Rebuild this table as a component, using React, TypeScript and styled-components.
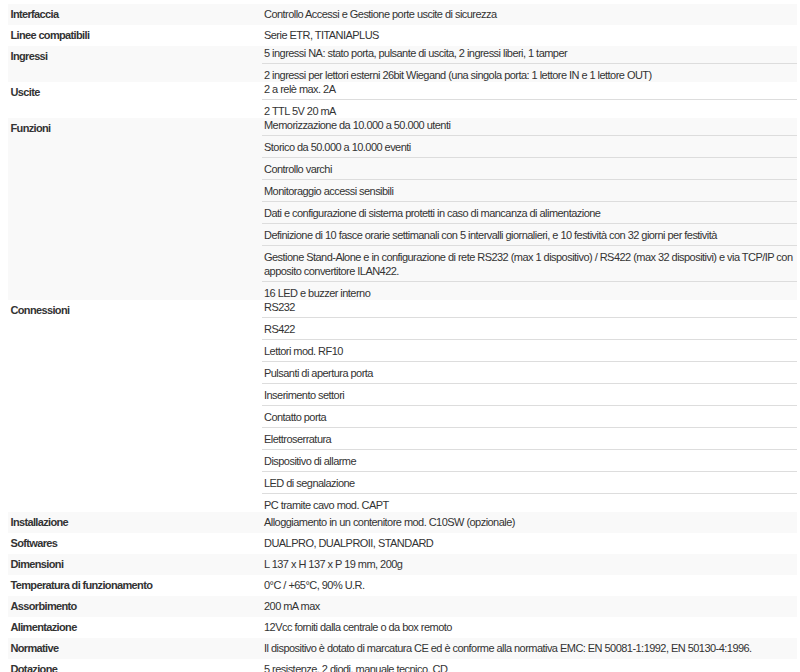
import React from 'react'
import styled, { createGlobalStyle } from 'styled-components'

const GlobalStyle = createGlobalStyle`
  html, body {
    margin: 0;
    padding: 0;
    background: #fff;
  }
  body {
    font-family: "Liberation Sans", Arial, sans-serif;
    font-size: 11px;
    line-height: 14px;
    letter-spacing: -0.54px;
    color: #333;
  }
`

type Spec = { label: string; values: string[] }

const specs: Spec[] = [
  { label: 'Interfaccia', values: ['Controllo Accessi e Gestione porte uscite di sicurezza'] },
  { label: 'Linee compatibili', values: ['Serie ETR, TITANIAPLUS'] },
  {
    label: 'Ingressi',
    values: [
      '5 ingressi NA: stato porta, pulsante di uscita, 2 ingressi liberi, 1 tamper',
      '2 ingressi per lettori esterni 26bit Wiegand (una singola porta: 1 lettore IN e 1 lettore OUT)',
    ],
  },
  { label: 'Uscite', values: ['2 a relè max. 2A', '2 TTL 5V 20 mA'] },
  {
    label: 'Funzioni',
    values: [
      'Memorizzazione da 10.000 a 50.000 utenti',
      'Storico da 50.000 a 10.000 eventi',
      'Controllo varchi',
      'Monitoraggio accessi sensibili',
      'Dati e configurazione di sistema protetti in caso di mancanza di alimentazione',
      'Definizione di 10 fasce orarie settimanali con 5 intervalli giornalieri, e 10 festività con 32 giorni per festività',
      'Gestione Stand-Alone e in configurazione di rete RS232 (max 1 dispositivo) / RS422 (max 32 dispositivi) e via TCP/IP con apposito convertitore ILAN422.',
      '16 LED e buzzer interno',
    ],
  },
  {
    label: 'Connessioni',
    values: [
      'RS232',
      'RS422',
      'Lettori mod. RF10',
      'Pulsanti di apertura porta',
      'Inserimento settori',
      'Contatto porta',
      'Elettroserratura',
      'Dispositivo di allarme',
      'LED di segnalazione',
      'PC tramite cavo mod. CAPT',
    ],
  },
  { label: 'Installazione', values: ['Alloggiamento in un contenitore mod. C10SW (opzionale)'] },
  { label: 'Softwares', values: ['DUALPRO, DUALPROII, STANDARD'] },
  { label: 'Dimensioni', values: ['L 137 x H 137 x P 19 mm, 200g'] },
  { label: 'Temperatura di funzionamento', values: ['0°C / +65°C, 90% U.R.'] },
  { label: 'Assorbimento', values: ['200 mA max'] },
  { label: 'Alimentazione', values: ['12Vcc forniti dalla centrale o da box remoto'] },
  {
    label: 'Normative',
    values: ['Il dispositivo è dotato di marcatura CE ed è conforme alla normativa EMC: EN 50081-1:1992, EN 50130-4:1996.'],
  },
  { label: 'Dotazione', values: ['5 resistenze, 2 diodi, manuale tecnico, CD'] },
]

const Page = styled.div`
  padding: 3.5px 3px 0 8px;
`

const SpecTable = styled.div`
  display: flex;
  flex-direction: column;
  width: 789px;
`

const Row = styled.div<{ $striped: boolean }>`
  display: grid;
  grid-template-columns: 254px 1fr;
  background: ${(p) => (p.$striped ? '#f9f9f9' : '#fff')};
`

const Label = styled.div`
  padding: 3.5px 3px 3.5px 2.5px;
  font-weight: bold;
  letter-spacing: -0.65px;
`

const Value = styled.div`
  padding: 3.5px 0 3.5px 2px;
`

const NestedList = styled.div`
  display: flex;
  flex-direction: column;
`

const NestedItem = styled.div`
  padding: 3.5px 0 3.5px 2px;
  border-top: 1px solid #ddd;

  &:first-child {
    border-top: none;
    padding-top: 0;
  }
  &:last-child {
    padding-bottom: 0;
  }
`

function App() {
  return (
    <>
      <GlobalStyle />
      <Page>
        <SpecTable>
          {specs.map((s, i) => (
            <Row key={s.label} $striped={i % 2 === 0}>
              <Label>{s.label}</Label>
              {s.values.length > 1 ? (
                <NestedList>
                  {s.values.map((v) => (
                    <NestedItem key={v}>{v}</NestedItem>
                  ))}
                </NestedList>
              ) : (
                <Value>{s.values[0]}</Value>
              )}
            </Row>
          ))}
        </SpecTable>
      </Page>
    </>
  )
}

export default App
